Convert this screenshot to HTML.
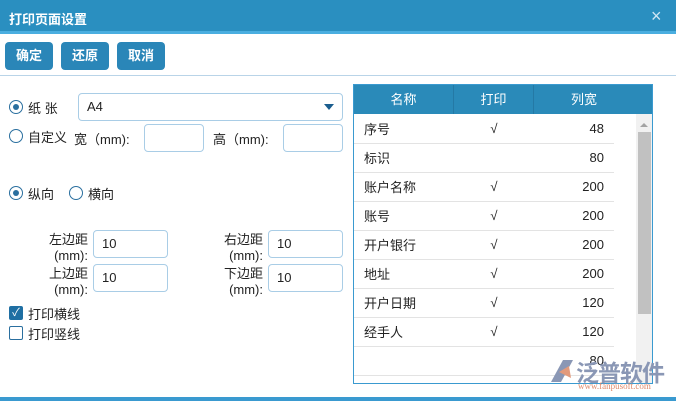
<!DOCTYPE html>
<html><head><meta charset="utf-8"><style>
*{margin:0;padding:0;box-sizing:border-box}
body{width:676px;height:401px;background:#fff;font-family:"Liberation Sans","Noto Sans CJK SC",sans-serif;font-size:13px;color:#222;position:relative;overflow:hidden}
.a{position:absolute}
.btn{position:absolute;top:42px;width:48px;height:28px;background:#2a86b8;border-radius:4px;color:#fff;font-weight:bold;text-align:center;line-height:28px;font-size:13px}
.inp{position:absolute;border:1px solid #a9cde6;border-radius:4px;background:#fff;padding-left:8px;line-height:26px;height:28px}
.rad{position:absolute;width:14px;height:14px;border:1.5px solid #2a6f9f;border-radius:50%;background:#fff}
.rad.on::after{content:"";position:absolute;left:2.5px;top:2.5px;width:6px;height:6px;border-radius:50%;background:#2a6f9f}
.lbl{position:absolute;text-align:right;line-height:16px}
table{border-collapse:collapse}
td{height:29px;border-bottom:1px solid #e3e3e3;font-size:13px}
</style></head><body>
<div class="a" style="left:0;top:0;width:676px;height:34px;background:#2a8fc0;border-bottom:3px solid #4aaee0"></div>
<div class="a" style="left:9px;top:9px;color:#fff;font-weight:bold;font-size:13px">打印页面设置</div>
<div class="a" style="left:651px;top:6px;color:#cfe6f4;font-size:18px">×</div>
<div class="btn" style="left:5px">确定</div>
<div class="btn" style="left:61px">还原</div>
<div class="btn" style="left:117px">取消</div>
<div class="a" style="left:0;top:75px;width:676px;height:1px;background:#b9d4e8"></div>

<div class="rad on" style="left:9px;top:100px"></div>
<div class="a" style="left:28px;top:98px">纸 张</div>
<div class="inp" style="left:78px;top:93px;width:265px;height:28px">A4</div>
<div class="a" style="left:324px;top:104px;width:0;height:0;border-left:5px solid transparent;border-right:5px solid transparent;border-top:6px solid #1a5d8e"></div>
<div class="rad" style="left:9px;top:129px"></div>
<div class="a" style="left:28px;top:127px">自定义</div>
<div class="a" style="left:74px;top:129px">宽（mm):</div>
<div class="inp" style="left:144px;top:124px;width:60px;height:28px"></div>
<div class="a" style="left:213px;top:129px">高（mm):</div>
<div class="inp" style="left:283px;top:124px;width:60px;height:28px"></div>

<div class="rad on" style="left:9px;top:186px"></div>
<div class="a" style="left:28px;top:184px">纵向</div>
<div class="rad" style="left:69px;top:186px"></div>
<div class="a" style="left:88px;top:184px">横向</div>

<div class="lbl" style="left:30px;top:232px;width:58px">左边距<br>(mm):</div>
<div class="inp" style="left:93px;top:230px;width:75px">10</div>
<div class="lbl" style="left:30px;top:266px;width:58px">上边距<br>(mm):</div>
<div class="inp" style="left:93px;top:264px;width:75px">10</div>
<div class="lbl" style="left:205px;top:232px;width:58px">右边距<br>(mm):</div>
<div class="inp" style="left:268px;top:230px;width:75px">10</div>
<div class="lbl" style="left:205px;top:266px;width:58px">下边距<br>(mm):</div>
<div class="inp" style="left:268px;top:264px;width:75px">10</div>

<div class="a" style="left:9px;top:306px;width:14px;height:14px;background:#1f6fa3;border-radius:2px;color:#fff;font-size:11px;line-height:14px;text-align:center">✓</div>
<div class="a" style="left:28px;top:304px">打印横线</div>
<div class="a" style="left:9px;top:326px;width:14px;height:14px;border:1.5px solid #2a6f9f;border-radius:2px"></div>
<div class="a" style="left:28px;top:324px">打印竖线</div>

<div class="a" style="left:353px;top:84px;width:300px;height:300px;border:1px solid #3a9ad0;overflow:hidden;background:#fff">
 <div style="height:29px;background:#2a8ab9;color:#fff;display:flex;line-height:29px">
  <div style="width:100px;text-align:center;border-right:1px solid #2479a5">名称</div>
  <div style="width:80px;text-align:center;border-right:1px solid #2479a5">打印</div>
  <div style="width:100px;text-align:center">列宽</div>
 </div>
 <table style="width:260px">
  <tr><td style="padding-left:10px;width:100px">序号</td><td style="text-align:center;width:80px">√</td><td style="text-align:right;padding-right:10px">48</td></tr>
  <tr><td style="padding-left:10px">标识</td><td></td><td style="text-align:right;padding-right:10px">80</td></tr>
  <tr><td style="padding-left:10px">账户名称</td><td style="text-align:center">√</td><td style="text-align:right;padding-right:10px">200</td></tr>
  <tr><td style="padding-left:10px">账号</td><td style="text-align:center">√</td><td style="text-align:right;padding-right:10px">200</td></tr>
  <tr><td style="padding-left:10px">开户银行</td><td style="text-align:center">√</td><td style="text-align:right;padding-right:10px">200</td></tr>
  <tr><td style="padding-left:10px">地址</td><td style="text-align:center">√</td><td style="text-align:right;padding-right:10px">200</td></tr>
  <tr><td style="padding-left:10px">开户日期</td><td style="text-align:center">√</td><td style="text-align:right;padding-right:10px">120</td></tr>
  <tr><td style="padding-left:10px">经手人</td><td style="text-align:center">√</td><td style="text-align:right;padding-right:10px">120</td></tr>
  <tr><td></td><td></td><td style="text-align:right;padding-right:10px">80</td></tr>
 </table>
 <div class="a" style="left:282px;top:29px;width:16px;height:270px;background:#f1f1f1"></div>
 <div class="a" style="left:286px;top:38px;border-left:4px solid transparent;border-right:4px solid transparent;border-bottom:4px solid #a3a3a3;width:0"></div>
 <div class="a" style="left:284px;top:47px;width:13px;height:182px;background:#c1c1c1"></div>
</div>
<svg class="a" style="left:549px;top:358px" width="26" height="26"><path d="M2 24 L14 2 L24 2 L12 24 Z" fill="#8a97b5"/><path d="M10 14 L20 8 L22 20 Z" fill="#e29a7c"/></svg>
<div class="a" style="left:576px;top:354px;font-size:23px;font-weight:bold;color:#8a97b5;letter-spacing:-1px">泛普软件</div>
<div class="a" style="left:578px;top:381px;font-size:9px;color:#e08a6a;font-family:'Liberation Serif',serif">www.fanpusoft.com</div>
<div class="a" style="left:0;top:397px;width:676px;height:4px;background:#3a9ad0"></div>
</body></html>
